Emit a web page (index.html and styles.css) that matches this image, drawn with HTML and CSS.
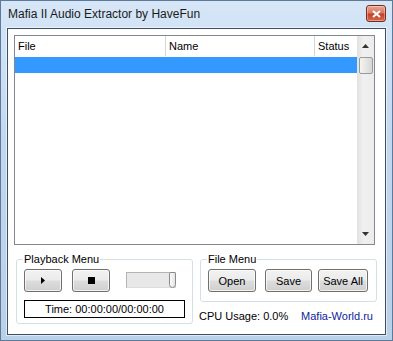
FILE: index.html
```html
<!DOCTYPE html>
<html lang="en">
<head>
    <meta charset="UTF-8">
    <meta name="viewport" content="width=device-width, initial-scale=1.0">
    <title>Mafia II Audio Extractor by HaveFun</title>
    <link rel="stylesheet" href="styles.css">
</head>
<body>
    <div class="window">
        <div class="titlebar">
            <span class="title">Mafia II Audio Extractor by HaveFun</span>
            <button class="close-btn" title="Close">
                <svg width="9" height="8" viewBox="0 0 9 8">
                    <path d="M1 1 L8 7 M8 1 L1 7" stroke="#fff" stroke-width="2" fill="none"/>
                </svg>
            </button>
        </div>

        <div class="client">
            <div class="listview">
                <div class="list-main">
                    <div class="list-header">
                        <div class="col col-file">File</div>
                        <div class="col col-name">Name</div>
                        <div class="col col-status">Status</div>
                    </div>
                    <div class="list-row selected"></div>
                </div>
                <div class="vscroll">
                    <div class="scroll-arrow">
                        <svg width="7" height="4" viewBox="0 0 7 4"><path d="M0 4 L3.5 0 L7 4 Z" fill="#333"/></svg>
                    </div>
                    <div class="scroll-track">
                        <div class="scroll-thumb"></div>
                    </div>
                    <div class="scroll-arrow">
                        <svg width="7" height="4" viewBox="0 0 7 4"><path d="M0 0 L7 0 L3.5 4 Z" fill="#333"/></svg>
                    </div>
                </div>
            </div>

            <div class="bottom">
                <fieldset class="group playback">
                    <legend>Playback Menu</legend>
                    <div class="controls">
                        <button class="btn btn-media" id="playBtn">
                            <svg width="4" height="7" viewBox="0 0 4 7"><path d="M0 0 L4 3.5 L0 7 Z" fill="#000"/></svg>
                        </button>
                        <button class="btn btn-media" id="stopBtn">
                            <svg width="7" height="7" viewBox="0 0 7 7"><rect width="7" height="7" fill="#000"/></svg>
                        </button>
                        <div class="slider">
                            <div class="slider-thumb"></div>
                        </div>
                    </div>
                    <div class="timebox">Time: 00:00:00/00:00:00</div>
                </fieldset>

                <div class="right-col">
                    <fieldset class="group filemenu">
                        <legend>File Menu</legend>
                        <div class="controls">
                            <button class="btn btn-open">Open</button>
                            <button class="btn btn-save">Save</button>
                            <button class="btn btn-saveall">Save All</button>
                        </div>
                    </fieldset>
                    <div class="status-line">
                        <span>CPU Usage: 0.0%</span>
                        <span class="site-link">Mafia-World.ru</span>
                    </div>
                </div>
            </div>
        </div>
    </div>
</body>
</html>
```

FILE: styles.css
```css
body {
    margin: 0;
    font-family: "Liberation Sans", Arial, sans-serif;
    font-size: 11px;
    color: #000;
}
.window {
    width: 393px;
    height: 341px;
    box-sizing: border-box;
    border: 1px solid #5d7a9b;
    background: linear-gradient(180deg, #d6e6f7 0%, #c3d8ef 40%, #b9d0e9 100%);
    display: flex;
    flex-direction: column;
}
.titlebar {
    height: 27px;
    display: flex;
    align-items: flex-start;
    justify-content: space-between;
    padding: 0 6px 0 7px;
}
.title {
    font-size: 12px;
    margin-top: 6px;
    color: #1b1b1b;
}
.close-btn {
    width: 20px;
    height: 17px;
    margin-top: 4px;
    padding: 0;
    border: 1px solid #7b2a1c;
    border-radius: 3px;
    background: linear-gradient(180deg, #e9a693 0%, #d9775e 45%, #c4412a 55%, #d46a4a 100%);
    box-shadow: inset 0 0 0 1px rgba(255,255,255,0.35);
    display: flex;
    align-items: center;
    justify-content: center;
}
.client {
    flex: 1;
    margin: 0 6px 5px 6px;
    border: 1px solid #3f4f63;
    box-shadow: 0 0 0 1px rgba(255,255,255,0.55);
    background: #fff;
    padding: 6px 0 0 6px;
}
.listview {
    width: 361px;
    height: 210px;
    box-sizing: border-box;
    border: 1px solid #828790;
    display: flex;
}
.list-main {
    flex: 1;
    display: flex;
    flex-direction: column;
}
.list-header {
    display: flex;
    height: 20px;
    margin-bottom: 1px;
}
.col {
    box-sizing: border-box;
    padding: 4px 0 0 3px;
    border-right: 1px solid #d5d5d5;
}
.col-file {
    width: 151px;
}
.col-name {
    width: 149px;
}
.col-status {
    flex: 1;
    border-right: none;
    padding-left: 3px;
}
.list-row {
    height: 16px;
}
.list-row.selected {
    background: #3399ff;
}
.vscroll {
    width: 17px;
    display: flex;
    flex-direction: column;
    background: linear-gradient(90deg, #e2e2e2, #f0f0f0 40%, #ececec);
}
.scroll-arrow {
    height: 20px;
    display: flex;
    align-items: center;
    justify-content: center;
}
.scroll-track {
    flex: 1;
    padding: 1px 1px 0 2px;
}
.scroll-thumb {
    height: 15px;
    border: 1px solid #9a9a9a;
    border-radius: 2px;
    background: linear-gradient(90deg, #f4f4f4, #e6e6e6 50%, #d6d6d6);
}
.bottom {
    display: flex;
    gap: 7px;
    margin-top: 8px;
    padding-left: 2px;
}
.group {
    margin: 0;
    padding: 0 0 0 7px;
    border: 1px solid #d5dfe5;
    border-radius: 3px;
    box-sizing: border-box;
}
.group legend {
    padding: 0 1px;
    margin-left: -1px;
    line-height: 13px;
}
.playback {
    width: 177px;
    height: 71px;
}
.controls {
    display: flex;
    align-items: flex-start;
    margin-top: 3px;
}
.btn {
    height: 23px;
    padding: 0;
    font-family: "Liberation Sans", Arial, sans-serif;
    font-size: 11px;
    border: 1px solid #707070;
    border-radius: 3px;
    background: linear-gradient(180deg, #f2f2f2 0%, #ebebeb 48%, #dddddd 52%, #cfcfcf 100%);
    box-shadow: inset 0 0 0 1px rgba(255,255,255,0.7);
    display: flex;
    align-items: center;
    justify-content: center;
    color: #000;
}
.btn-media {
    width: 38px;
    margin-right: 10px;
}
.slider {
    width: 50px;
    height: 16px;
    margin: 3px 0 0 6px;
    box-sizing: border-box;
    border: 1px solid #b4b4b4;
    border-right-color: #dcdcdc;
    border-bottom-color: #dcdcdc;
    background: #e8e8e8;
    display: flex;
    justify-content: flex-end;
}
.slider-thumb {
    width: 7px;
    height: 16px;
    margin-top: -1px;
    margin-right: -1px;
    box-sizing: border-box;
    border: 1px solid #8a8a8a;
    border-radius: 2px 2px 4px 4px;
    background: linear-gradient(90deg, #fbfbfb, #e4e4e4);
}
.timebox {
    width: 161px;
    height: 18px;
    box-sizing: border-box;
    margin-top: 8px;
    border: 1px solid #000;
    text-align: center;
    line-height: 16px;
}
.right-col {
    display: flex;
    flex-direction: column;
}
.filemenu {
    width: 177px;
    height: 49px;
}
.btn-open {
    width: 48px;
    margin-right: 9px;
}
.btn-save {
    width: 47px;
    margin-right: 6px;
}
.btn-saveall {
    width: 50px;
}
.status-line {
    display: flex;
    justify-content: space-between;
    width: 174px;
    margin-top: 8px;
    margin-left: -1px;
}
.site-link {
    color: #0f1d9e;
}
```
